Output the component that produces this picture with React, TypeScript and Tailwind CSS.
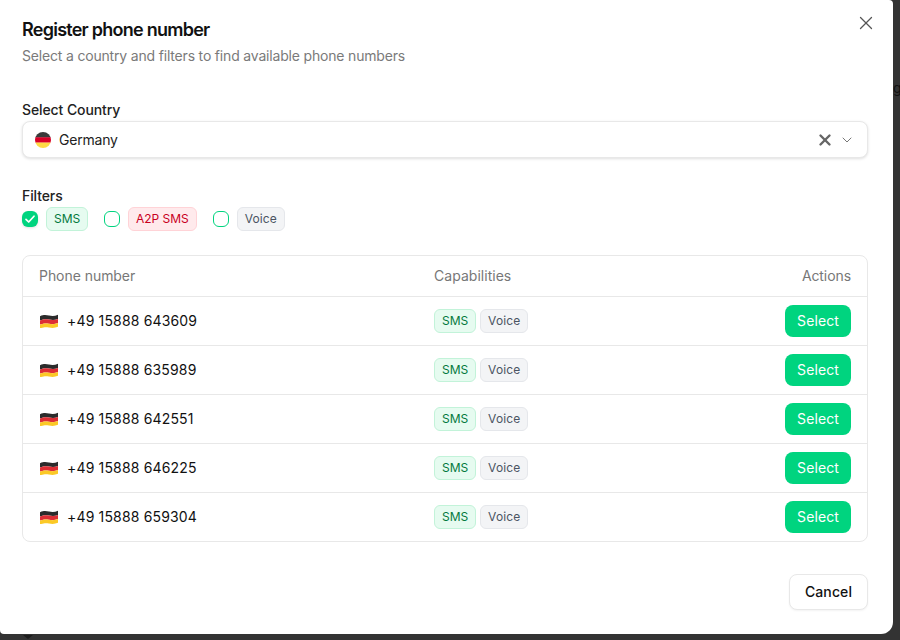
import { ChevronDown, X } from "lucide-react";

const numbers = ["+49 15888 643609", "+49 15888 635989", "+49 15888 642551", "+49 15888 646225", "+49 15888 659304"];

function GermanDot() {
  return (
    <svg width="16" height="16" viewBox="0 0 16 16" className="shrink-0">
      <clipPath id="dot">
        <circle cx="8" cy="8" r="8" />
      </clipPath>
      <g clipPath="url(#dot)">
        <rect width="16" height="5.6" fill="#3a3a3a" />
        <rect y="5.3" width="16" height="5.4" fill="#d80027" />
        <rect y="10.6" width="16" height="5.4" fill="#ffda44" />
      </g>
    </svg>
  );
}

function GermanFlag() {
  return (
    <svg width="18" height="14" viewBox="0 0 18 14" className="ml-px shrink-0">
      <path d="M0 2.2C4 .6 6 1 9 1.6s6 .6 9-.8V5C15 6.300 12 6.200 9 5.600S4 4.900 0 6.400Z" fill="#2b2b2b" />
      <path d="M0 6.400C4 4.900 6 5 9 5.600s6 .7 9-.6v4.100c-3 1.300-6 1.300-9 .7s-5-.7-9 .8Z" fill="#dd2e34" />
      <path d="M0 10.600c4-1.500 6-1.400 9-.8s6 .6 9-.7v3.700c-3 1.300-6 1.300-9 .7s-5-.6-9 .9Z" fill="#fbc926" />
    </svg>
  );
}

function Badge({ label, tone }: { label: string; tone: "green" | "red" | "gray" }) {
  const tones = {
    green: "bg-[#e6fbf0] border-[#c2f3d9] text-[#047a3e] tracking-[-0.05px]",
    red: "bg-[#ffeaec] border-[#ffd3d7] text-[#c9001e] tracking-[-0.05px]",
    gray: "bg-[#f3f4f6] border-[#e5e7eb] text-[#4b5563] tracking-[0.15px]",
  };
  return (
    <span className={`inline-flex h-6 items-center rounded-md border px-[7px] text-xs ${tones[tone]}`}>
      {label}
    </span>
  );
}

function Check({ checked }: { checked?: boolean }) {
  if (checked) {
    return (
      <span className="flex h-4 w-4 shrink-0 items-center justify-center rounded-md bg-[#00d47f] shadow-sm">
        <svg width="12" height="12" viewBox="0 0 12 12" fill="none" stroke="white" strokeWidth="1.7" strokeLinecap="round" strokeLinejoin="round">
          <path d="M2 6.300 4.700 9 10 3.200" />
        </svg>
      </span>
    );
  }
  return <span className="block h-4 w-4 shrink-0 rounded-md border border-[#00d47f] bg-white" />;
}

export default function App() {
  return (
    <div className="relative h-[640px] w-[900px] overflow-hidden bg-[#333333] font-['Inter',sans-serif]">
      {/* bits of the page behind the dialog */}
      <span className="absolute left-[893px] top-[78px] text-sm text-[#111]">g</span>
      <span className="absolute left-[23px] top-[635px] h-0 w-0 border-x-[5px] border-t-[4px] border-x-transparent border-t-[#1c1c1c]" />

      <div className="relative flex h-[634px] w-[893px] flex-col rounded-tr-[4px] rounded-br-xl rounded-bl-[4px] bg-white px-[22px] pt-[19px] text-[#111]">
        <button type="button" className="absolute right-[16px] top-[12px] text-[#555]">
          <X size={22} strokeWidth={1.4} />
        </button>

        <h2 className="text-lg leading-[22px] font-semibold tracking-[-0.75px]">Register phone number</h2>
        <p className="mt-[5px] text-sm leading-5 tracking-[-0.18px] text-[#7a7a7a]">
          Select a country and filters to find available phone numbers
        </p>

        <label className="mt-[34px] text-sm leading-5 font-medium tracking-[-0.1px] text-[#222]">Select Country</label>
        <div className="mt-[1px] flex h-[37px] w-[846px] items-center rounded-lg border border-[#e8e8e8] bg-white pr-3 pl-3 shadow-[0_1px_3px_rgba(0,0,0,0.13)]">
          <GermanDot />
          <span className="ml-2 text-sm tracking-[-0.2px] text-[#222]">Germany</span>
          <X size={18} strokeWidth={3.2} className="ml-auto text-[#666]" />
          <ChevronDown size={16} strokeWidth={1.5} className="ml-[5px] text-[#777]" />
        </div>

        <div className="mt-[28px] text-sm leading-5 font-medium tracking-[-0.1px] text-[#222]">Filters</div>
        <div className="mt-[1px] flex h-6 items-center">
          <Check checked />
          <span className="ml-2 flex">
            <Badge label="SMS" tone="green" />
          </span>
          <span className="ml-4 flex">
            <Check />
          </span>
          <span className="ml-2 flex">
            <Badge label="A2P SMS" tone="red" />
          </span>
          <span className="ml-4 flex">
            <Check />
          </span>
          <span className="ml-2 flex">
            <Badge label="Voice" tone="gray" />
          </span>
        </div>

        <div className="mt-6 w-[846px] rounded-lg border border-[#e8e8e8]">
          <div className="flex h-10 items-center px-4 text-sm text-[#777]">
            <span className="w-[395px] tracking-[-0.05px]">Phone number</span>
            <span className="tracking-[0.03px]">Capabilities</span>
            <span className="ml-auto tracking-[-0.08px]">Actions</span>
          </div>
          {numbers.map((n) => (
            <div key={n} className="flex h-[49px] items-center border-t border-[#e8e8e8] px-4">
              <div className="flex w-[395px] items-center gap-[9px] text-sm tracking-[0.16px] text-[#111]">
                <GermanFlag />
                {n}
              </div>
              <div className="flex items-center gap-1">
                <Badge label="SMS" tone="green" />
                <Badge label="Voice" tone="gray" />
              </div>
              <button type="button" className="ml-auto h-8 w-[66px] rounded-lg bg-[#00d47f] text-sm font-normal tracking-[0.1px] text-white">
                Select
              </button>
            </div>
          ))}
        </div>

        <div className="mt-8 flex w-[846px] justify-end">
          <button type="button" className="h-9 w-[79px] rounded-lg border border-[#e8e8e8] bg-white text-sm font-medium tracking-[0.1px] text-[#111] shadow-[0_1px_2px_rgba(0,0,0,0.05)]">
            Cancel
          </button>
        </div>
      </div>
    </div>
  );
}
